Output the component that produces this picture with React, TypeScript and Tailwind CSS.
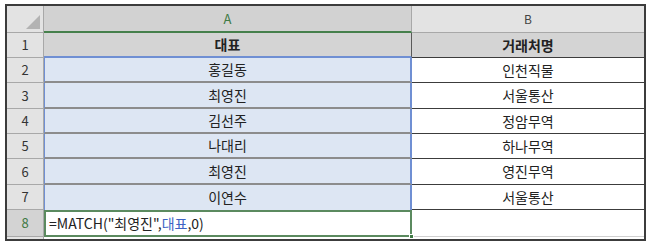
import React from "react";

const rows = [
  ["홍길동", "인천직물"],
  ["최영진", "서울통산"],
  ["김선주", "정암무역"],
  ["나대리", "하나무역"],
  ["최영진", "영진무역"],
  ["이연수", "서울통산"],
];

// row heights in the sheet are not all equal pixels
const heights = ["h-[25px]", "h-[26px]", "h-[25px]", "h-[25px]", "h-[26px]", "h-[25px]"];

const font = { fontFamily: '"Noto Sans CJK KR", "Noto Sans", sans-serif' };

const RowHead = ({ n, active }: { n: number; active?: boolean }) => (
  <div
    className={`w-[37px] shrink-0 flex items-center justify-center border-r border-b border-[#a8a8a8] text-[13px] ${
      active ? "bg-[#d3d3d3] text-[#3f7a45]" : "bg-[#e3e3e3] text-[#333]"
    }`}
  >
    {n}
  </div>
);

export default function App() {
  return (
    <div className="w-[650px] h-[248px] bg-white pt-[4px] pl-[5px]" style={font}>
      <div className="w-[641px] h-[237px] border-2 border-[#3c3c3c] bg-white overflow-hidden flex flex-col">
        {/* column header */}
        <div className="flex h-[27px] shrink-0">
          <div className="w-[37px] shrink-0 bg-[#e3e3e3] border-r border-b border-[#a8a8a8] flex items-end justify-end p-[3px]">
            <svg width="14" height="14" viewBox="0 0 14 14">
              <polygon points="14,0 14,14 0,14" fill="#b3b3b3" />
            </svg>
          </div>
          <div className="w-[368px] shrink-0 bg-[#d2d2d2] border-b-2 border-[#46804c] border-r border-r-[#a8a8a8] flex items-center justify-center text-[13px] text-[#3f7a45]">
            A
          </div>
          <div className="flex-1 bg-[#e3e3e3] border-b border-[#a8a8a8] flex items-center justify-center text-[12px] text-[#444]">
            B
          </div>
        </div>

        {/* row 1 */}
        <div className="flex h-[25px] shrink-0">
          <RowHead n={1} />
          <div className="w-[368px] shrink-0 bg-[#d4d4d4] border-b-2 border-b-[#6f8fd3] border-r border-r-[#5a5a5a] flex items-center justify-center text-[14px] font-bold text-[#222]">
            대표
          </div>
          <div className="flex-1 bg-[#d4d4d4] border-b border-[#3c3c3c] flex items-center justify-center text-[14px] font-bold text-[#222]">
            거래처명
          </div>
        </div>

        {rows.map(([a, b], i) => (
          <div key={i} className={`flex ${heights[i]} shrink-0`}>
            <RowHead n={i + 2} />
            <div
              className={`w-[368px] shrink-0 bg-[#dde6f3] border-l border-l-[#6f8fd3] border-r-2 border-r-[#6f8fd3] flex items-center justify-center text-[14px] text-[#222] ${
                i < rows.length - 1 ? "border-b-2 border-b-[#8c8c8c]" : ""
              }`}
            >
              {a}
            </div>
            <div className="flex-1 bg-white border-b border-[#3c3c3c] flex items-center justify-center text-[14px] text-[#222]">
              {b}
            </div>
          </div>
        ))}

        {/* row 8 */}
        <div className="flex h-[27px] shrink-0">
          <RowHead n={8} active />
          <div className="relative w-[368px] shrink-0 bg-white border-2 border-[#5b8a5f] flex items-center pl-[3px] text-[14px] text-[#222]">
            =MATCH("최영진",<span className="text-[#3d63c4]">대표</span>,0)
            <div className="absolute -right-[4px] -bottom-[4px] w-[5px] h-[5px] bg-[#3f7a45] border border-white" />
          </div>
          <div className="flex-1 bg-white border-b border-[#d0d0d0]" />
        </div>
        <div className="flex flex-1">
          <div className="w-[37px] shrink-0 bg-[#e3e3e3] border-r border-[#a8a8a8]" />
          <div className="flex-1" />
        </div>
      </div>
    </div>
  );
}
